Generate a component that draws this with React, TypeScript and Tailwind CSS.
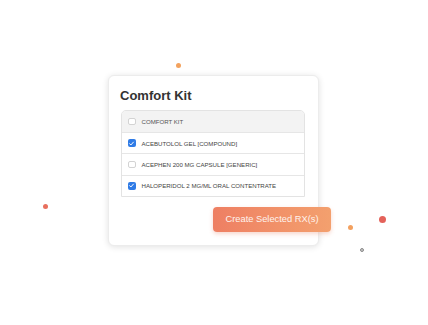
import React from "react";

const rows = [
  { label: "ACEBUTOLOL GEL [COMPOUND]", checked: true },
  { label: "ACEPHEN 200 MG CAPSULE [GENERIC]", checked: false },
  { label: "HALOPERIDOL 2 MG/ML ORAL CONTENTRATE", checked: true },
];

function Box({ checked }: { checked: boolean }) {
  return checked ? (
    <span className="flex h-[7.5px] w-[7.5px] shrink-0 items-center justify-center rounded-[2px] bg-[#2f7be6]">
      <svg viewBox="0 0 8 8" className="h-[7px] w-[7px]">
        <path d="M1.8 4.2 L3.3 5.7 L6.2 2.4" fill="none" stroke="white" strokeWidth="1.1" strokeLinecap="round" strokeLinejoin="round" />
      </svg>
    </span>
  ) : (
    <span className="h-[7.5px] w-[7.5px] shrink-0 rounded-[2px] border border-[#d3d3d3] bg-white" />
  );
}

export default function App() {
  return (
    <div
      className="relative flex h-[325px] w-[428px] items-start justify-start overflow-hidden bg-white pl-[108px] pt-[75px]"
      style={{ fontFamily: '"Liberation Sans", Arial, sans-serif' }}
    >
      <span className="absolute left-[176px] top-[63px] h-[5px] w-[5px] rounded-full bg-[#f3a25e]" />
      <span className="absolute left-[43px] top-[204px] h-[5px] w-[5px] rounded-full bg-[#e8705e]" />
      <span className="absolute left-[348px] top-[225px] h-[5px] w-[5px] rounded-full bg-[#f3a05f]" />
      <span className="absolute left-[379px] top-[216px] h-[7px] w-[7px] rounded-full bg-[#e4625a]" />
      <span className="absolute left-[360px] top-[248px] h-[4px] w-[4px] rounded-full border border-[#8a8a8a] bg-[#c8c8c8]" />

      <div className="w-[211px] rounded-[6px] border border-[#ececec] bg-white px-[11px] pb-[13px] pt-[12px] shadow-[0_1px_6px_rgba(0,0,0,0.12)]">
        <h1 className="text-[13px] font-bold leading-[16px] text-[#333]">Comfort Kit</h1>
        <div className="ml-[1px] mr-[2px] mt-[6px] overflow-hidden rounded-t-[5px] border border-[#e3e3e3]">
          <div className="flex h-[21px] items-center gap-[6px] bg-[#f3f3f3] pl-[6px]">
            <Box checked={false} />
            <span className="text-[6.1px] text-[#555]">COMFORT KIT</span>
          </div>
          {rows.map((r) => (
            <div key={r.label} className="flex h-[21.33px] items-center gap-[6px] border-t border-[#e6e6e6] bg-white pl-[6px]">
              <Box checked={r.checked} />
              <span className="text-[6.1px] text-[#444]">{r.label}</span>
            </div>
          ))}
        </div>
        <div className="mr-[-24px] mt-[10px] flex justify-end">
          <button className="h-[25px] w-[118px] rounded-[4px] bg-gradient-to-r from-[#ee7f63] to-[#f3a06e] text-[9.3px] text-[#fff3ee] shadow-[0_2px_4px_rgba(230,120,90,0.3)]">
            Create Selected RX(s)
          </button>
        </div>
      </div>
    </div>
  );
}
